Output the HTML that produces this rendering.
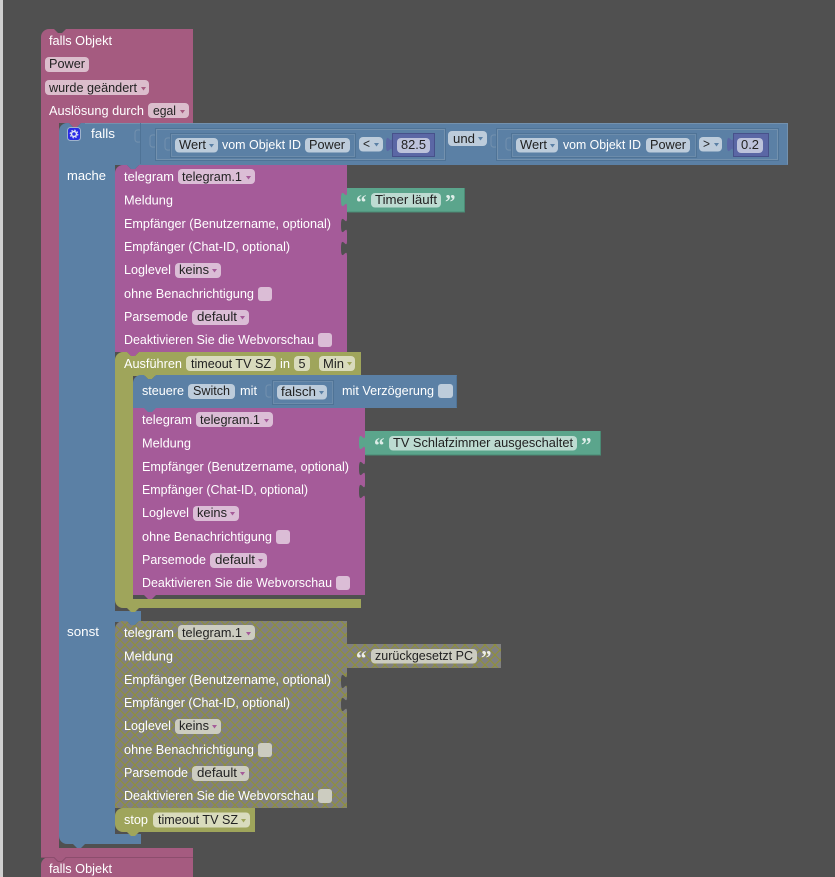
<!DOCTYPE html>
<html><head><meta charset="utf-8"><style>
html,body{margin:0;padding:0;background:#505050;width:835px;height:877px;overflow:hidden}
svg{position:absolute;left:0;top:0;display:block}
text{font-family:"Liberation Sans",sans-serif;font-size:13px}
.w{fill:#fff}
.d{fill:#222}
.line{fill:none;stroke:#7391ae;stroke-width:1}
.dk{fill:none;stroke:#4f7396;stroke-width:1}
.q{font-family:"Liberation Serif",serif;font-weight:bold;font-size:21px}
</style></head><body>
<svg width="835" height="877" viewBox="0 0 835 877" xmlns="http://www.w3.org/2000/svg">
<defs>
<pattern id="h" width="10" height="10" patternUnits="userSpaceOnUse" x="0" y="0"><rect width="10" height="10" fill="#808080"/><path d="M0 0L10 10M10 0L0 10" stroke="#8f8f3c" stroke-width="1.2"/></pattern>
</defs>
<rect width="835" height="877" fill="#505050"/>
<rect width="3" height="877" fill="#cfcfcf"/>

<!-- outer pink -->
<path fill="#A55B80" d="M41,37a8,8 0 0 1 8,-8h5l4,4h4l4,-4H193V123H59V848H193V857H41Z"/>
<path fill="#A55B80" d="M41,865a8,8 0 0 1 8,-8h5l4,4h4l4,-4H193V877H41Z"/>
<path fill="#A55B80" d="M54,857l4,4h4l4,-4Z"/>
<path fill="none" stroke="#8c4d6d" d="M41,857.500H54l4,4h4l4,-4H193"/>
<text class="w" x="49" y="45" textLength="63" lengthAdjust="spacingAndGlyphs">falls Objekt</text>
<rect x="45" y="57" width="44" height="15" rx="4" fill="#DBBDCC"/>
<text class="d" x="49" y="68" textLength="36" lengthAdjust="spacingAndGlyphs">Power</text>
<rect x="45" y="80" width="104" height="15" rx="4" fill="#DBBDCC"/>
<text class="d" x="49" y="92" textLength="88" lengthAdjust="spacingAndGlyphs">wurde geändert</text>
<path d="M141,87h5l-2.500,3.500z" fill="#A55B80"/>
<text class="w" x="49" y="115" textLength="95" lengthAdjust="spacingAndGlyphs">Auslösung durch</text>
<rect x="148" y="103" width="41" height="15" rx="4" fill="#DBBDCC"/>
<text class="d" x="153" y="115" textLength="23" lengthAdjust="spacingAndGlyphs">egal</text>
<path d="M180,110h5l-2.500,3.500z" fill="#A55B80"/>
<text class="w" x="49" y="873" textLength="63" lengthAdjust="spacingAndGlyphs">falls Objekt</text>

<!-- blue if -->
<path fill="#A55B80" d="M69,123l4,4h4l4,-4Z"/>
<path fill="#5B80A5" d="M59,131a8,8 0 0 1 8,-8h2l4,4h4l4,-4H788V165H115V611H141V622H115V834H141V844H85l-4,4h-4l-4,-4H67a8,8 0 0 1 -8,-8Z"/>
<path fill="none" stroke="#7391ae" d="M85,123.500H787.500V164.500"/>
<path d="M140.500,123V164" stroke="#4f7396" fill="none"/>
<rect x="67.500" y="127.500" width="13" height="13" rx="3" fill="#2a2ae6" stroke="#9fb3cc"/>
<circle cx="74" cy="134" r="2.500" fill="none" stroke="#dfe3f5" stroke-width="1.500"/>
<circle cx="74" cy="134" r="3.800" fill="none" stroke="#dfe3f5" stroke-width="1.200" stroke-dasharray="1.500 1.500"/>
<text class="w" x="91" y="138" textLength="24" lengthAdjust="spacingAndGlyphs">falls</text>
<text class="w" x="67" y="180" textLength="39" lengthAdjust="spacingAndGlyphs">mache</text>
<text class="w" x="67" y="636" textLength="32" lengthAdjust="spacingAndGlyphs">sonst</text>
<path class="line" d="M140,130c-1,0 -5,-1 -5,3v6c0,4 4,3 5,3"/>

<!-- logic 1 -->
<rect x="155.500" y="128.500" width="290" height="32" class="dk"/>
<rect x="156.500" y="129.500" width="288" height="30" class="line"/>
<path class="line" d="M155,135c-1,0 -5,-1 -5,3v6c0,4 4,3 5,3"/>
<rect x="170.500" y="133.500" width="185" height="24" class="dk"/>
<rect x="171.500" y="134.500" width="183" height="22" class="line" opacity=".7"/>
<path class="line" d="M170,138c-1,0 -5,-1 -5,3v6c0,4 4,3 5,3"/>
<rect x="175" y="138" width="43" height="14.500" rx="4" fill="#BDCCDB"/>
<text class="d" x="179" y="149" textLength="27" lengthAdjust="spacingAndGlyphs">Wert</text>
<path d="M209,144h5l-2.500,3.500z" fill="#5B80A5"/>
<text class="w" x="222" y="149" textLength="79" lengthAdjust="spacingAndGlyphs">vom Objekt ID</text>
<rect x="305" y="138" width="45" height="14.500" rx="4" fill="#BDCCDB"/>
<text class="d" x="309" y="149" textLength="36" lengthAdjust="spacingAndGlyphs">Power</text>
<rect x="359" y="137" width="24" height="14.500" rx="4" fill="#BDCCDB"/>
<text class="d" x="363" y="148" textLength="7" lengthAdjust="spacingAndGlyphs">&lt;</text>
<path d="M374,143h5l-2.500,3.500z" fill="#5B80A5"/>
<path fill="#5B67A5" d="M392,133H435V157H392V152c0,-10 -6,8 -6,-7.500s6,2.500 6,-7.500Z"/>
<rect x="392.500" y="133.500" width="42" height="23" fill="none" stroke="#47518a"/>
<rect x="397" y="138" width="33" height="15" rx="4" fill="#BDC2DB"/>
<text class="d" x="401" y="149" textLength="25" lengthAdjust="spacingAndGlyphs">82.5</text>

<rect x="448" y="131" width="39" height="15" rx="4" fill="#BDCCDB"/>
<text class="d" x="453" y="143" textLength="22" lengthAdjust="spacingAndGlyphs">und</text>
<path d="M478,137h5l-2.500,3.500z" fill="#5B80A5"/>

<!-- logic 2 -->
<rect x="496.500" y="128.500" width="282" height="32" class="dk"/>
<rect x="497.500" y="129.500" width="280" height="30" class="line"/>
<path class="line" d="M496,135c-1,0 -5,-1 -5,3v6c0,4 4,3 5,3"/>
<rect x="511.500" y="133.500" width="185" height="24" class="dk"/>
<rect x="512.500" y="134.500" width="183" height="22" class="line" opacity=".7"/>
<path class="line" d="M511,138c-1,0 -5,-1 -5,3v6c0,4 4,3 5,3"/>
<rect x="516" y="138" width="42" height="14.500" rx="4" fill="#BDCCDB"/>
<text class="d" x="520" y="149" textLength="27" lengthAdjust="spacingAndGlyphs">Wert</text>
<path d="M550,144h5l-2.500,3.500z" fill="#5B80A5"/>
<text class="w" x="563" y="149" textLength="78" lengthAdjust="spacingAndGlyphs">vom Objekt ID</text>
<rect x="646" y="138" width="44" height="14.500" rx="4" fill="#BDCCDB"/>
<text class="d" x="650" y="149" textLength="36" lengthAdjust="spacingAndGlyphs">Power</text>
<rect x="699" y="137" width="23" height="14.500" rx="4" fill="#BDCCDB"/>
<text class="d" x="703" y="148" textLength="7" lengthAdjust="spacingAndGlyphs">&gt;</text>
<path d="M714,143h5l-2.500,3.500z" fill="#5B80A5"/>
<path fill="#5B67A5" d="M733,133H769V157H733V152c0,-10 -6,8 -6,-7.500s6,2.500 6,-7.500Z"/>
<rect x="733.500" y="133.500" width="35" height="23" fill="none" stroke="#47518a"/>
<rect x="737" y="138" width="26" height="15" rx="4" fill="#BDC2DB"/>
<text class="d" x="741" y="149" textLength="18" lengthAdjust="spacingAndGlyphs">0.2</text>

<!-- telegram 1 -->
<path fill="#A55B99" d="M115,173a8,8 0 0 1 8,-8h4l4,4h4l4,-4H347V218c0,10 -6,-8 -6,7.500s6,-2.500 6,7.500V241c0,10 -6,-8 -6,7.500s6,-2.500 6,7.500V352H115Z"/>
<path fill="#5B80A5" d="M127,165l4,4h4l4,-4Z"/>
<text class="w" x="124" y="181" textLength="50" lengthAdjust="spacingAndGlyphs">telegram</text>
<rect x="178" y="169" width="77" height="15" rx="4" fill="#DBBDD6"/>
<text class="d" x="182" y="181" textLength="60" lengthAdjust="spacingAndGlyphs">telegram.1</text>
<path d="M246,176h5l-2.500,3.500z" fill="#A55B99"/>
<text class="w" x="124" y="204.500" textLength="49" lengthAdjust="spacingAndGlyphs">Meldung</text>
<text class="w" x="124" y="228" textLength="207" lengthAdjust="spacingAndGlyphs">Empfänger (Benutzername, optional)</text>
<text class="w" x="124" y="251" textLength="166" lengthAdjust="spacingAndGlyphs">Empfänger (Chat-ID, optional)</text>
<text class="w" x="124" y="274" textLength="47" lengthAdjust="spacingAndGlyphs">Loglevel</text>
<rect x="175" y="263" width="46" height="15" rx="4" fill="#DBBDD6"/>
<text class="d" x="179" y="274" textLength="30" lengthAdjust="spacingAndGlyphs">keins</text>
<path d="M212,269h5l-2.500,3.500z" fill="#A55B99"/>
<text class="w" x="124" y="298" textLength="130" lengthAdjust="spacingAndGlyphs">ohne Benachrichtigung</text>
<rect x="258" y="287" width="14" height="14" rx="3" fill="#DBBDD6"/>
<text class="w" x="124" y="321" textLength="64" lengthAdjust="spacingAndGlyphs">Parsemode</text>
<rect x="192" y="310" width="57" height="15" rx="4" fill="#DBBDD6"/>
<text class="d" x="197" y="321" textLength="40" lengthAdjust="spacingAndGlyphs">default</text>
<path d="M240,316h5l-2.500,3.500z" fill="#A55B99"/>
<text class="w" x="124" y="344" textLength="190" lengthAdjust="spacingAndGlyphs">Deaktivieren Sie die Webvorschau</text>
<rect x="318" y="333" width="14" height="14" rx="3" fill="#DBBDD6"/>

<!-- string 1 -->
<path fill="#5BA58C" d="M347,188H465V212H347V207c0,-10 -6,8 -6,-7.500s6,2.500 6,-7.500Z"/>
<path d="M347.500,212H464.500V188" fill="none" stroke="#4a8a74"/>
<text class="q" x="356" y="209" fill="#DDEDE8">“</text>
<rect x="371" y="193" width="70" height="14.500" rx="4" fill="#BDDBD1"/>
<text class="d" x="375" y="204" textLength="62" lengthAdjust="spacingAndGlyphs">Timer läuft</text>
<text class="q" x="445" y="209" fill="#DDEDE8">”</text>

<!-- olive timeout -->
<path fill="#A55B99" d="M127,352l4,4h4l4,-4Z"/>
<path fill="#9FA55B" d="M115,360a8,8 0 0 1 8,-8h4l4,4h4l4,-4H361V376H133V599H361V608H123a8,8 0 0 1 -8,-8Z"/>
<path fill="#9FA55B" d="M127,608l4,4h4l4,-4Z"/>
<text class="w" x="124" y="368" textLength="58" lengthAdjust="spacingAndGlyphs">Ausführen</text>
<rect x="186" y="356" width="90" height="15" rx="4" fill="#D9DBBD"/>
<text class="d" x="191" y="368" textLength="80" lengthAdjust="spacingAndGlyphs">timeout TV SZ</text>
<text class="w" x="280" y="368" textLength="10" lengthAdjust="spacingAndGlyphs">in</text>
<rect x="294" y="356" width="16" height="15" rx="4" fill="#D9DBBD"/>
<text class="d" x="298.500" y="368" textLength="7" lengthAdjust="spacingAndGlyphs">5</text>
<rect x="319" y="356" width="36" height="15" rx="4" fill="#D9DBBD"/>
<text class="d" x="323" y="368" textLength="21" lengthAdjust="spacingAndGlyphs">Min</text>
<path d="M347,362h5l-2.500,3.500z" fill="#9FA55B"/>

<!-- steuere -->
<path fill="#9FA55B" d="M144,375l4,4h4l4,-4Z"/>
<path fill="#5B80A5" d="M133,383a8,8 0 0 1 8,-8h3l4,4h4l4,-4H457V408H133Z"/>
<path fill="none" stroke="#4f7396" d="M456.500,375.500V407.500"/>
<text class="w" x="142" y="395" textLength="42" lengthAdjust="spacingAndGlyphs">steuere</text>
<rect x="188" y="384" width="47" height="15" rx="4" fill="#BDCCDB"/>
<text class="d" x="193" y="395" textLength="37" lengthAdjust="spacingAndGlyphs">Switch</text>
<text class="w" x="240" y="395" textLength="17" lengthAdjust="spacingAndGlyphs">mit</text>
<path class="line" d="M271,385c-1,0 -5,-1 -5,3v6c0,4 4,3 5,3"/>
<rect x="272.500" y="380.500" width="61" height="24" class="dk"/>
<rect x="273.500" y="381.500" width="59" height="22" class="line" opacity=".7"/>
<rect x="277" y="385" width="50" height="14.500" rx="4" fill="#BDCCDB"/>
<text class="d" x="281" y="396" textLength="35" lengthAdjust="spacingAndGlyphs">falsch</text>
<path d="M319,391h5l-2.500,3.500z" fill="#5B80A5"/>
<text class="w" x="342" y="395" textLength="92" lengthAdjust="spacingAndGlyphs">mit Verzögerung</text>
<rect x="438" y="384" width="15" height="14" rx="3" fill="#BDCCDB"/>

<!-- telegram 2 -->
<path fill="#A55B99" d="M133,408H365V461c0,10 -6,-8 -6,7.500s6,-2.500 6,7.500V484c0,10 -6,-8 -6,7.500s6,-2.500 6,7.500V595H133Z"/>
<path fill="#5B80A5" d="M144,408l4,4h4l4,-4Z"/>
<path fill="#A55B99" d="M144,595l4,4h4l4,-4Z"/>
<text class="w" x="142" y="424" textLength="50" lengthAdjust="spacingAndGlyphs">telegram</text>
<rect x="196" y="412" width="77" height="15" rx="4" fill="#DBBDD6"/>
<text class="d" x="200" y="424" textLength="60" lengthAdjust="spacingAndGlyphs">telegram.1</text>
<path d="M264,419h5l-2.500,3.500z" fill="#A55B99"/>
<text class="w" x="142" y="447.500" textLength="49" lengthAdjust="spacingAndGlyphs">Meldung</text>
<text class="w" x="142" y="471" textLength="207" lengthAdjust="spacingAndGlyphs">Empfänger (Benutzername, optional)</text>
<text class="w" x="142" y="494" textLength="166" lengthAdjust="spacingAndGlyphs">Empfänger (Chat-ID, optional)</text>
<text class="w" x="142" y="517" textLength="47" lengthAdjust="spacingAndGlyphs">Loglevel</text>
<rect x="193" y="506" width="46" height="15" rx="4" fill="#DBBDD6"/>
<text class="d" x="197" y="517" textLength="30" lengthAdjust="spacingAndGlyphs">keins</text>
<path d="M230,512h5l-2.500,3.500z" fill="#A55B99"/>
<text class="w" x="142" y="541" textLength="130" lengthAdjust="spacingAndGlyphs">ohne Benachrichtigung</text>
<rect x="276" y="530" width="14" height="14" rx="3" fill="#DBBDD6"/>
<text class="w" x="142" y="564" textLength="64" lengthAdjust="spacingAndGlyphs">Parsemode</text>
<rect x="210" y="553" width="57" height="15" rx="4" fill="#DBBDD6"/>
<text class="d" x="215" y="564" textLength="40" lengthAdjust="spacingAndGlyphs">default</text>
<path d="M258,559h5l-2.500,3.500z" fill="#A55B99"/>
<text class="w" x="142" y="587" textLength="190" lengthAdjust="spacingAndGlyphs">Deaktivieren Sie die Webvorschau</text>
<rect x="336" y="576" width="14" height="14" rx="3" fill="#DBBDD6"/>

<!-- string 2 -->
<path fill="#5BA58C" d="M365,431H601V455H365V450c0,-10 -6,8 -6,-7.500s6,2.500 6,-7.500Z"/>
<path d="M365.500,455H600.500V431" fill="none" stroke="#4a8a74"/>
<text class="q" x="374" y="452" fill="#DDEDE8">“</text>
<rect x="389" y="436" width="188" height="14.500" rx="4" fill="#BDDBD1"/>
<text class="d" x="393" y="447" textLength="180" lengthAdjust="spacingAndGlyphs">TV Schlafzimmer ausgeschaltet</text>
<text class="q" x="581" y="452" fill="#DDEDE8">”</text>

<!-- telegram disabled -->
<path fill="url(#h)" d="M115,629a8,8 0 0 1 8,-8h4l4,4h4l4,-4H347V674c0,10 -6,-8 -6,7.500s6,-2.500 6,7.500V697c0,10 -6,-8 -6,7.500s6,-2.500 6,7.500V808H115Z"/>
<path fill="#5B80A5" d="M127,621l4,4h4l4,-4Z"/>
<text class="w" x="124" y="637" textLength="50" lengthAdjust="spacingAndGlyphs">telegram</text>
<rect x="178" y="625" width="77" height="15" rx="4" fill="#CCCCC0"/>
<text class="d" x="182" y="637" textLength="60" lengthAdjust="spacingAndGlyphs">telegram.1</text>
<path d="M246,632h5l-2.500,3.500z" fill="#A55B99"/>
<text class="w" x="124" y="660.500" textLength="49" lengthAdjust="spacingAndGlyphs">Meldung</text>
<text class="w" x="124" y="684" textLength="207" lengthAdjust="spacingAndGlyphs">Empfänger (Benutzername, optional)</text>
<text class="w" x="124" y="707" textLength="166" lengthAdjust="spacingAndGlyphs">Empfänger (Chat-ID, optional)</text>
<text class="w" x="124" y="730" textLength="47" lengthAdjust="spacingAndGlyphs">Loglevel</text>
<rect x="175" y="719" width="46" height="15" rx="4" fill="#CCCCC0"/>
<text class="d" x="179" y="730" textLength="30" lengthAdjust="spacingAndGlyphs">keins</text>
<path d="M212,725h5l-2.500,3.500z" fill="#A55B99"/>
<text class="w" x="124" y="754" textLength="130" lengthAdjust="spacingAndGlyphs">ohne Benachrichtigung</text>
<rect x="258" y="743" width="14" height="14" rx="3" fill="#CCCCC0"/>
<text class="w" x="124" y="777" textLength="64" lengthAdjust="spacingAndGlyphs">Parsemode</text>
<rect x="192" y="766" width="57" height="15" rx="4" fill="#CCCCC0"/>
<text class="d" x="197" y="777" textLength="40" lengthAdjust="spacingAndGlyphs">default</text>
<path d="M240,772h5l-2.500,3.500z" fill="#A55B99"/>
<text class="w" x="124" y="800" textLength="190" lengthAdjust="spacingAndGlyphs">Deaktivieren Sie die Webvorschau</text>
<rect x="318" y="789" width="14" height="14" rx="3" fill="#CCCCC0"/>

<!-- string disabled -->
<path fill="url(#h)" d="M347,644H501V668H347V663c0,-10 -6,8 -6,-7.500s6,2.500 6,-7.500Z"/>
<text class="q" x="356" y="665" fill="#eeeeea">“</text>
<rect x="371" y="649" width="106" height="14.500" rx="4" fill="#CCCCC0"/>
<text class="d" x="375" y="660" textLength="98" lengthAdjust="spacingAndGlyphs">zurückgesetzt PC</text>
<text class="q" x="481" y="665" fill="#eeeeea">”</text>

<!-- stop -->
<path fill="#9FA55B" d="M115,816a8,8 0 0 1 8,-8H255V832H139l-4,4h-4l-4,-4H123a8,8 0 0 1 -8,-8Z"/>
<text class="w" x="124" y="824" textLength="24" lengthAdjust="spacingAndGlyphs">stop</text>
<rect x="153" y="812.500" width="97" height="15" rx="4" fill="#D9DBBD"/>
<text class="d" x="158" y="824" textLength="80" lengthAdjust="spacingAndGlyphs">timeout TV SZ</text>
<path d="M241,819h5l-2.500,3.500z" fill="#9FA55B"/>
</svg>
</body></html>
